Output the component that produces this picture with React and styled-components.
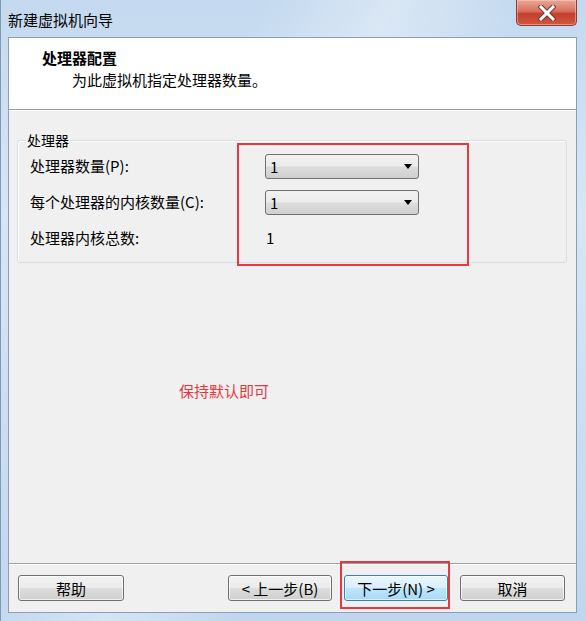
import React from "react"
import styled, {createGlobalStyle} from "styled-components"

const GlobalStyle = createGlobalStyle`
  html, body {
    margin: 0;
    padding: 0;
  }
  body {
    font-family: "Noto Sans CJK SC", "Liberation Sans", sans-serif;
    color: #000;
  }
`

const Window = styled.div`
  width: 586px;
  height: 621px;
  box-sizing: border-box;
  display: flex;
  flex-direction: column;
  padding: 0 9px 8px 7px;
  background:
    linear-gradient(115deg, rgba(255, 255, 255, 0) 30%, rgba(255, 255, 255, 0.35) 45%, rgba(255, 255, 255, 0) 60%),
    linear-gradient(180deg, #c4d9ef 0%, #d6e6f6 35%, #c0d6ee 100%);
  border-left: 1px solid #7f98b3;
`

const TitleBar = styled.div`
  height: 37px;
  display: flex;
  align-items: flex-start;
  justify-content: space-between;
`

const TitleText = styled.span`
  font-size: 15px;
  line-height: 18px;
  margin-top: 11px;
`

const CloseButton = styled.div`
  width: 61px;
  height: 26px;
  box-sizing: border-box;
  display: flex;
  align-items: center;
  justify-content: center;
  border: 1px solid #8b3b2f;
  border-top: none;
  border-radius: 0 0 5px 5px;
  background: linear-gradient(180deg, #e9a898 0%, #d9705c 45%, #c4402c 55%, #d2583f 100%);
  box-shadow: inset 0 0 0 1px rgba(255, 220, 210, 0.45);
`

const Client = styled.div`
  flex: 1;
  display: flex;
  flex-direction: column;
  background: #f0f0f0;
  border: 1px solid #8a9fb6;
`

const Header = styled.div`
  height: 72px;
  background: #fff;
  border-bottom: 1px solid #a0a0a0;
  box-sizing: border-box;
  padding: 10px 0 0 33px;
`

const HeaderTitle = styled.div`
  font-size: 15px;
  font-weight: bold;
  line-height: 20px;
`

const HeaderSub = styled.div`
  font-size: 15px;
  line-height: 20px;
  margin-top: 2px;
  padding-left: 30px;
`

const Body = styled.div`
  flex: 1;
  padding: 22px 9px 0 8px;
  border-top: 1px solid #fff;
`

const GroupWrap = styled.div`
  position: relative;
`

const Group = styled.fieldset`
  margin: 0;
  padding: 6px 12px 11px 12px;
  border: 1px solid #d5dfe5;
  border-radius: 3px;
  box-shadow: inset 1px 1px 0 #fff;
`

const Legend = styled.legend`
  font-size: 14px;
  line-height: 14px;
  padding: 0 1px;
  margin-left: -4px;
`

const Rows = styled.div`
  display: grid;
  grid-template-columns: 235px 154px;
  grid-auto-rows: 26px;
  row-gap: 10px;
  align-items: center;
`

const Label = styled.span`
  font-size: 15px;
  line-height: 20px;
`

const Value = styled.span`
  font-size: 15px;
  line-height: 20px;
  padding-left: 1px;
`

const Select = styled.div`
  height: 25px;
  box-sizing: border-box;
  display: flex;
  align-items: center;
  justify-content: space-between;
  padding: 0 6px 0 4px;
  border: 1px solid #707070;
  border-radius: 3px;
  background: linear-gradient(180deg, #f2f2f2 0%, #ebebeb 48%, #dddddd 52%, #cfcfcf 100%);
  font-size: 15px;
`

const Arrow = styled.span`
  width: 0;
  height: 0;
  border-left: 4px solid transparent;
  border-right: 4px solid transparent;
  border-top: 5px solid #000;
`

const Mark = styled.div`
  position: absolute;
  box-sizing: border-box;
  border: 2px solid #e8373f;
  pointer-events: none;
  left: ${(p) => p.left}px;
  top: ${(p) => p.top}px;
  width: ${(p) => p.width}px;
  height: ${(p) => p.height}px;
`

const Note = styled.div`
  margin: 118px 0 0 162px;
  font-size: 15px;
  line-height: 20px;
  color: #e5383e;
`

const Footer = styled.div`
  display: flex;
  align-items: center;
  padding: 11px 11px 11px 9px;
  border-top: 1px solid #a0a0a0;
  box-shadow: inset 0 1px 0 #fff;
`

const Button = styled.div`
  width: ${(p) => p.width || 104}px;
  height: 26px;
  box-sizing: border-box;
  display: flex;
  align-items: center;
  justify-content: center;
  font-size: 15px;
  white-space: pre;
  border: 1px solid ${(p) => (p.primary ? "#3c7fb1" : "#707070")};
  border-radius: 3px;
  background: ${(p) =>
    p.primary
      ? "linear-gradient(180deg, #eaf6fd 0%, #d9f0fc 48%, #bee6fd 52%, #a7d9f5 100%)"
      : "linear-gradient(180deg, #f2f2f2 0%, #ebebeb 48%, #dddddd 52%, #cfcfcf 100%)"};
  box-shadow: inset 0 0 0 1px ${(p) => (p.primary ? "rgba(255,255,255,0.6)" : "rgba(255,255,255,0.7)")};
`

const ButtonSlot = styled.div`
  position: relative;
  margin-left: ${(p) => p.gap || 0}px;
`

const Spacer = styled.div`
  flex: 1;
`

function CloseGlyph() {
  return (
    <svg width="18" height="16" viewBox="0 0 18 16">
      <path d="M3 2 L15 14 M15 2 L3 14" stroke="#6b3a33" strokeWidth="5" strokeLinecap="square" fill="none" />
      <path d="M3 2 L15 14 M15 2 L3 14" stroke="#fff" strokeWidth="3" strokeLinecap="square" fill="none" />
    </svg>
  )
}

export default function App() {
  return (
    <>
      <GlobalStyle />
      <Window>
        <TitleBar>
          <TitleText>新建虚拟机向导</TitleText>
          <CloseButton>
            <CloseGlyph />
          </CloseButton>
        </TitleBar>
        <Client>
          <Header>
            <HeaderTitle>处理器配置</HeaderTitle>
            <HeaderSub>为此虚拟机指定处理器数量。</HeaderSub>
          </Header>
          <Body>
            <GroupWrap>
              <Group>
                <Legend>处理器</Legend>
                <Rows>
                  <Label>处理器数量(P):</Label>
                  <Select>
                    1<Arrow />
                  </Select>
                  <Label>每个处理器的内核数量(C):</Label>
                  <Select>
                    1<Arrow />
                  </Select>
                  <Label>处理器内核总数:</Label>
                  <Value>1</Value>
                </Rows>
              </Group>
              <Mark left={220} top={10} width={232} height={123} />
            </GroupWrap>
            <Note>保持默认即可</Note>
          </Body>
          <Footer>
            <Button width={106}>帮助</Button>
            <Spacer />
            <ButtonSlot>
              <Button>{"< 上一步(B)"}</Button>
            </ButtonSlot>
            <ButtonSlot gap={12}>
              <Button primary>{"下一步(N) >"}</Button>
              <Mark left={-4} top={-14} width={110} height={48} />
            </ButtonSlot>
            <ButtonSlot gap={12}>
              <Button width={105}>取消</Button>
            </ButtonSlot>
          </Footer>
        </Client>
      </Window>
    </>
  )
}
